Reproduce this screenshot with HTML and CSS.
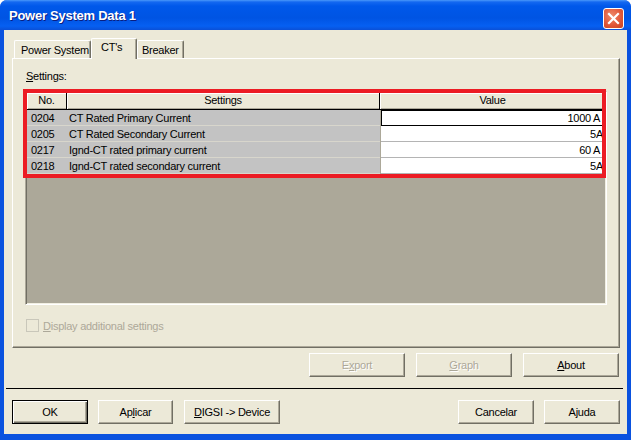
FILE: index.html
```html
<!DOCTYPE html>
<html>
<head>
<meta charset="utf-8">
<link rel="stylesheet" href="styles.css">
</head>
<body>
<div class="window">
  <div class="titlebar">
    <span class="title">Power System Data 1</span>
    <div class="close">
      <svg width="13" height="13" viewBox="0 0 13 13"><path d="M2 2 L11 11 M11 2 L2 11" stroke="#fff" stroke-width="2.2" stroke-linecap="square"/></svg>
    </div>
  </div>
  <div class="client">
    <div class="tabs">
      <div class="tab">Power System</div>
      <div class="tab active">CT's</div>
      <div class="tab">Breaker</div>
    </div>
    <div class="panel">
      <div class="label"><u>S</u>ettings:</div>
      <div class="listbox">
        <div class="grid">
          <div class="hcell c-no">No.</div>
          <div class="hcell c-set">Settings</div>
          <div class="hcell c-val">Value</div>

          <div class="cell c-no">0204</div>
          <div class="cell c-set">CT Rated Primary Current</div>
          <div class="cell c-val focus">1000 A&nbsp;</div>

          <div class="cell c-no">0205</div>
          <div class="cell c-set">CT Rated Secondary Current</div>
          <div class="cell c-val">5A</div>

          <div class="cell c-no">0217</div>
          <div class="cell c-set">Ignd-CT rated primary current</div>
          <div class="cell c-val">60 A&nbsp;</div>

          <div class="cell c-no">0218</div>
          <div class="cell c-set">Ignd-CT rated secondary current</div>
          <div class="cell c-val">5A</div>
        </div>
        <div class="highlight"></div>
      </div>
      <div class="check"><span class="box"></span><span class="check-label"><u>D</u>isplay additional settings</span></div>
    </div>
    <div class="btnrow top">
      <div class="btn disabled">E<u>x</u>port</div>
      <div class="btn disabled"><u>G</u>raph</div>
      <div class="btn"><u>A</u>bout</div>
    </div>
    <div class="sep"></div>
    <div class="btnrow bottom">
      <div class="btn default">OK</div>
      <div class="btn w75">Ap<u>l</u>icar</div>
      <div class="btn wide"><u>D</u>IGSI -&gt; Device</div>
      <div class="spacer"></div>
      <div class="btn">Cancelar</div>
      <div class="btn">Ajuda</div>
    </div>
  </div>
</div>
</body>
</html>
```

FILE: styles.css
```css
* { box-sizing: border-box; }
html, body { margin: 0; padding: 0; background: #ffffff; }
body { width: 631px; height: 440px; overflow: hidden; font-family: "Liberation Sans", Arial, sans-serif; font-size: 11px; letter-spacing: -0.25px; color: #000; }

.window {
  width: 631px; height: 440px;
  background: #0A52DF;
  border-radius: 7px 7px 0 0;
  display: flex; flex-direction: column;
  overflow: hidden;
}
.titlebar {
  height: 30px; flex: none;
  position: relative;
  background: linear-gradient(#4A98FA 0px, #1468F0 2px, #0058EA 6px, #0054E3 18px, #0660F2 26px, #0A50D8 30px);
  display: flex; align-items: center;
  padding-left: 9px;
}
.title {
  color: #fff; font-weight: bold; font-size: 13px; letter-spacing: -0.25px;
  text-shadow: 1px 1px 0 #0A1E80;
  margin-top: 1px;
}
.close {
  position: absolute; right: 7px; top: 8px;
  width: 21px; height: 21px;
  border: 1px solid #fff; border-radius: 3px;
  background: radial-gradient(circle at 40% 35%, #EE8A6A 0%, #E2583A 55%, #C8421E 100%);
  display: flex; align-items: center; justify-content: center;
}

.client {
  margin: 0 4px;
  height: 404px; flex: none;
  background: #ECE9D8;
  padding-top: 8px;
  display: flex; flex-direction: column;
}

.tabs { display: flex; align-items: flex-end; height: 20px; margin-left: 10px; position: relative; z-index: 2; }
.tab {
  flex: none;
  white-space: nowrap;
  height: 18px; padding: 1px 0 0 6px;
  border-top: 1px solid #fff; border-left: 1px solid #fff; border-right: 1px solid #716F64;
  box-shadow: inset -1px 0 0 #ACA899;
  border-radius: 2px 2px 0 0;
  line-height: 16px;
  background: #ECE9D8;
}
.tab:first-child { width: 77px; }
.tab.active { height: 21px; margin-bottom: -1px; width: 46px; padding-left: 9px; padding-top: 0; line-height: 16px; }
.tab:last-child { width: 47px; padding-left: 4px; }

.panel {
  margin-left: 8px; width: 608px; height: 290px; flex: none;
  border-top: 1px solid #fff; border-left: 1px solid #fff;
  border-right: 1px solid #716F64; border-bottom: 1px solid #716F64;
  box-shadow: inset -1px -1px 0 #ACA899;
  padding: 11px 0 0 13px;
}
.label { line-height: 13px; height: 13px; }

.listbox {
  position: relative;
  margin-top: 8px; margin-left: -1px;
  width: 582px; height: 214px;
  border-top: 1px solid #ACA899; border-left: 1px solid #ACA899;
  border-right: 1px solid #fff; border-bottom: 1px solid #fff;
  box-shadow: inset 1px 1px 0 #716F64, inset -1px -1px 0 #F1EFE2;
  background: #ACA899;
  padding: 1px;
}
.grid {
  display: grid;
  grid-template-columns: 40px 313px 225px;
  grid-template-rows: 17px 16px 16px 16px 16px;
}
.hcell {
  background: #ECE9D8;
  border-right: 1px solid #000;
  border-bottom: 1px solid #000;
  box-shadow: inset 1px 1px 0 #fff, inset 0 -1px 0 #ACA899;
  text-align: center; line-height: 15px;
}
.hcell.c-val { border-right: none; }
.cell { padding-top: 1px; line-height: 14px; border-bottom: 1px solid #D8D6CC; white-space: nowrap; overflow: hidden; }
.cell.c-no { background: #C3C3C3; padding-left: 4px; }
.cell.c-set { background: #C3C3C3; padding-left: 2px; }
.cell.c-val { background: #fff; text-align: right; padding-right: 2px; border-bottom: 1px solid #B4B4B4; margin-left: 1px; }
.cell.c-val.focus { border: 1px solid #000; padding-top: 0; line-height: 14px; padding-right: 1px; }

.highlight {
  position: absolute; left: -3px; top: -3px;
  width: 583px; height: 89px;
  border: 4px solid #EC1C24;
  pointer-events: none;
}

.check { display: flex; align-items: center; margin-top: 14px; height: 13px; color: #ACA899; }
.box { width: 13px; height: 13px; border: 1px solid #C9C7BA; background: #ECE9D8; margin-right: 4px; }

.btnrow { display: flex; flex: none; }
.btnrow.top { margin-top: 5px; justify-content: flex-end; gap: 11px; padding-right: 8px; }
.btnrow.bottom { margin-top: 11px; padding-left: 8px; padding-right: 7px; gap: 10px; }
.spacer { flex: 1; }
.btn {
  flex: none;
  width: 76px; height: 24px;
  border-top: 1px solid #fff; border-left: 1px solid #fff;
  border-right: 1px solid #716F64; border-bottom: 1px solid #716F64;
  box-shadow: inset -1px -1px 0 #ACA899;
  background: #ECE9D8;
  display: flex; align-items: center; justify-content: center;
  line-height: 13px;
  white-space: nowrap;
}
.btnrow.top .btn { width: 96px; }
.btn.w75 { width: 75px; }
.btn.wide { width: 96px; margin-left: 1px; }
.btn.disabled { color: #ACA899; text-shadow: 1px 1px 0 #fff; }
.btn.default { border: 1px solid #000; box-shadow: inset 1px 1px 0 #fff, inset -1px -1px 0 #716F64, inset -2px -2px 0 #ACA899; }

.sep { height: 1px; background: #000; margin: 11px 0 0 2px; width: 617px; flex: none; }
```
